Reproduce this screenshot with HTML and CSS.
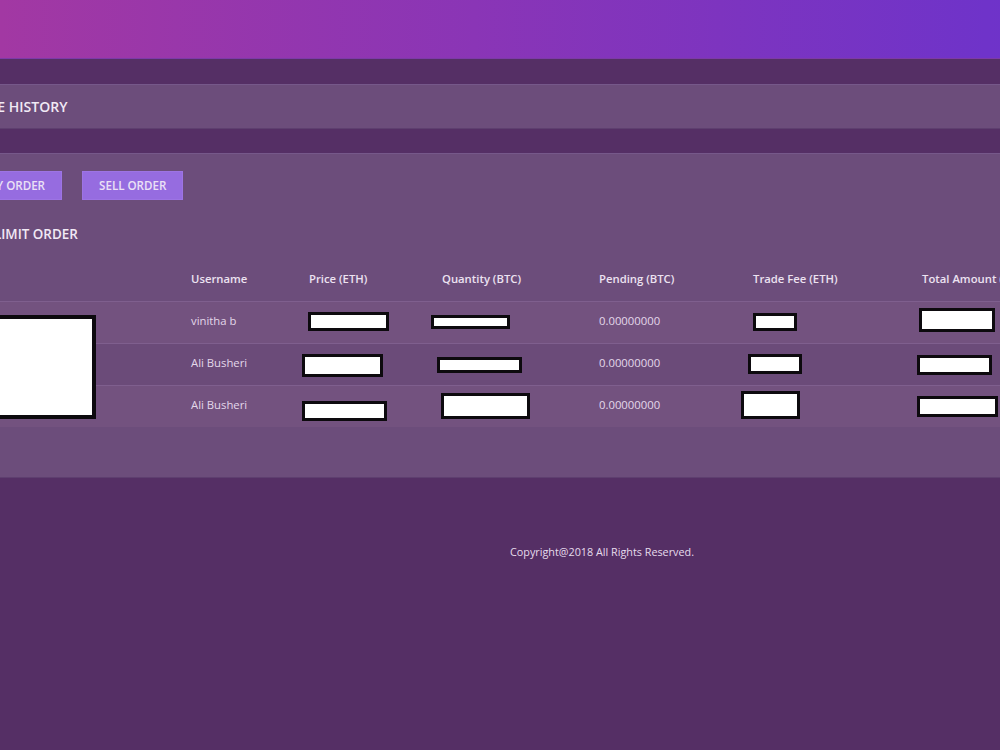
FILE: index.html
```html
<!DOCTYPE html>
<html lang="en">
<head>
  <meta charset="UTF-8">
  <meta name="viewport" content="width=device-width, initial-scale=1.0">
  <title>Trade History</title>
  <link rel="stylesheet" href="styles.css">
</head>
<body>
  <div class="page">
    <div class="top-bar"></div>

    <div class="main">
      <div class="panel panel-title">
        <span>TRADE HISTORY</span>
      </div>

      <div class="panel panel-orders">
        <div class="button-row">
          <button class="tab-btn">BUY ORDER</button>
          <button class="tab-btn">SELL ORDER</button>
        </div>

        <h3 class="section-title">LIMIT ORDER</h3>

        <table class="orders">
          <thead>
            <tr>
              <th class="col-img"></th>
              <th class="col-user">Username</th>
              <th class="col-price">Price (ETH)</th>
              <th class="col-qty">Quantity (BTC)</th>
              <th class="col-pending">Pending (BTC)</th>
              <th class="col-fee">Trade Fee (ETH)</th>
              <th>Total Amount (ETH)</th>
            </tr>
          </thead>
          <tbody>
            <tr>
              <td></td>
              <td>vinitha b</td>
              <td></td>
              <td></td>
              <td>0.00000000</td>
              <td></td>
              <td></td>
            </tr>
            <tr>
              <td></td>
              <td>Ali Busheri</td>
              <td></td>
              <td></td>
              <td>0.00000000</td>
              <td></td>
              <td></td>
            </tr>
            <tr>
              <td></td>
              <td>Ali Busheri</td>
              <td></td>
              <td></td>
              <td>0.00000000</td>
              <td></td>
              <td></td>
            </tr>
          </tbody>
        </table>
      </div>
    </div>

    <div class="footer">Copyright@2018 All Rights Reserved.</div>
  </div>

  <!-- masked values, drawn over the table -->
  <div class="masks">
    <span class="mask mask-img"></span>
    <span class="mask m-price-1"></span>
    <span class="mask m-qty-1"></span>
    <span class="mask m-fee-1"></span>
    <span class="mask m-total-1"></span>
    <span class="mask m-price-2"></span>
    <span class="mask m-qty-2"></span>
    <span class="mask m-fee-2"></span>
    <span class="mask m-total-2"></span>
    <span class="mask m-price-3"></span>
    <span class="mask m-qty-3"></span>
    <span class="mask m-fee-3"></span>
    <span class="mask m-total-3"></span>
  </div>
</body>
</html>
```

FILE: styles.css
```css
html, body {
  margin: 0;
  padding: 0;
  overflow: hidden;
}

body {
  font-family: "Open Sans", "DejaVu Sans", sans-serif;
  background-color: #552f65;
  color: #e9deef;
  position: relative;
  min-height: 750px;
}

.page {
  width: 1278px;
  margin-left: -37px;
}

.top-bar {
  height: 58px;
  background: linear-gradient(to right, #a83aa5 0%, #a238a3 3%, #8a35b6 40%, #6f33c9 80%, #6a33cf 100%);
  border-bottom: 1px solid #7d3aa8;
}

.main {
  padding-top: 25px;
}

.panel {
  background-color: #6c4d7b;
  border-top: 1px solid #76588a;
  border-bottom: 1px solid #5e3f6f;
}

.panel-title {
  height: 43px;
  display: flex;
  align-items: center;
  margin-bottom: 24px;
}

.panel-title span {
  font-size: 14px;
  font-weight: 600;
  color: #f1e9f5;
  margin: -1px 0 0 -2px;
}

.panel-orders {
  padding: 17px 0 50px 3px;
}

.button-row {
  display: flex;
  gap: 20px;
  margin-left: -3px;
}

.tab-btn {
  font-family: "Open Sans", "DejaVu Sans", sans-serif;
  font-size: 11.6px;
  font-weight: 600;
  color: #ebe0f6;
  background-color: #966ce0;
  border: 1px solid #9d74e4;
  height: 29px;
  padding: 0 16px;
  border-radius: 0;
}

.section-title {
  margin: 26px 0 0 28px;
  font-size: 13.4px;
  font-weight: 600;
  color: #f1e9f5;
  line-height: 16px;
}

.orders {
  border-collapse: collapse;
  table-layout: fixed;
  width: 1240px;
  margin-top: 14px;
  font-size: 11.3px;
}

.orders th {
  text-align: left;
  font-weight: 600;
  height: 45px;
  padding: 0;
  vertical-align: middle;
  color: #ece2f1;
}

.orders tbody tr {
  height: 42px;
}

.orders td {
  padding: 11px 0 0;
  vertical-align: top;
  border-top: 1px solid #7f5f8e;
  color: #e3d8ea;
}

.orders tbody tr:nth-child(odd) td {
  background-color: #73527f;
}

.orders tbody tr:nth-child(even) td {
  background-color: #6b4b79;
}

.orders tbody tr:last-child {
  height: 41px;
}

.col-img { width: 225px; }
.col-user { width: 118px; }
.col-price { width: 133px; }
.col-qty { width: 157px; }
.col-pending { width: 154px; }
.col-fee { width: 169px; }

.footer {
  text-align: center;
  font-size: 10.8px;
  padding-top: 66px;
  color: #e6dcec;
}

/* redaction boxes over the table */
.masks {
  position: absolute;
  top: 0;
  left: 0;
  width: 1000px;
  height: 750px;
  pointer-events: none;
}

.mask {
  position: absolute;
  display: block;
  box-sizing: border-box;
  background: #fff;
  border: 3px solid #0d0a0e;
}

.mask-img { left: -10px; top: 315px; width: 106px; height: 104px; border-width: 4px; }

.m-price-1 { left: 308px; top: 312px; width: 81px; height: 19px; }
.m-qty-1 { left: 431px; top: 315px; width: 79px; height: 14px; }
.m-fee-1 { left: 753px; top: 313px; width: 44px; height: 18px; }
.m-total-1 { left: 919px; top: 308px; width: 76px; height: 24px; }

.m-price-2 { left: 302px; top: 354px; width: 81px; height: 23px; }
.m-qty-2 { left: 437px; top: 357px; width: 85px; height: 16px; }
.m-fee-2 { left: 748px; top: 354px; width: 54px; height: 20px; }
.m-total-2 { left: 917px; top: 355px; width: 75px; height: 20px; }

.m-price-3 { left: 302px; top: 401px; width: 85px; height: 20px; }
.m-qty-3 { left: 441px; top: 393px; width: 89px; height: 26px; }
.m-fee-3 { left: 741px; top: 391px; width: 59px; height: 28px; }
.m-total-3 { left: 917px; top: 396px; width: 81px; height: 21px; }
```
